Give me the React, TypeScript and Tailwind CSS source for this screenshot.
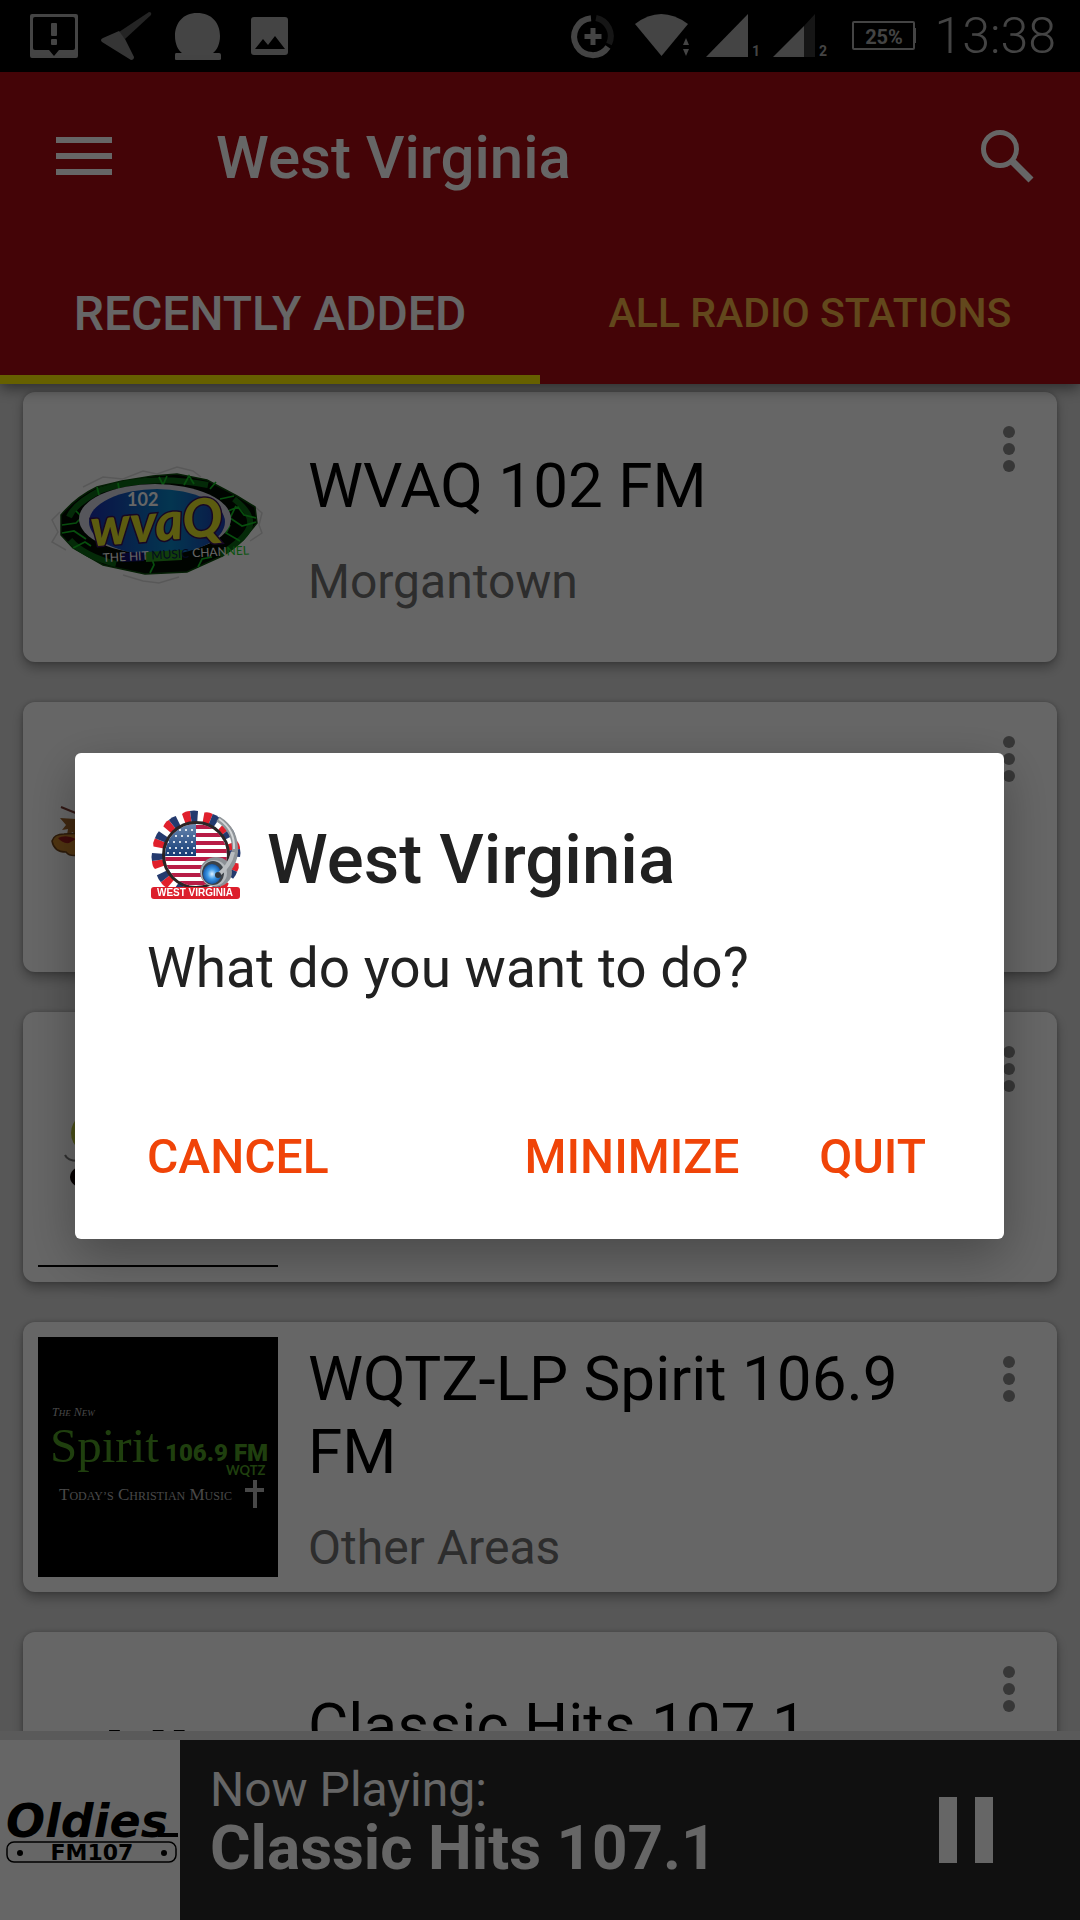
import { useState, type ReactNode } from "react";

type Station = {
  id: number;
  name?: string;
  area?: string;
  logo: ReactNode;
};

const TABS = ["RECENTLY ADDED", "ALL RADIO STATIONS"];

/* ---------- Status bar ---------- */

const StatusBar = () => (
  <div className="flex h-[72px] shrink-0 items-center justify-between bg-black pl-[18px] pr-6 text-[#aaaaaa]">
    <div className="flex">
      {/* Alert message */}
      <svg viewBox="0 0 72 72" className="size-[72px]" fill="currentColor">
        <path
          fillRule="evenodd"
          d="M14 14h44a2 2 0 0 1 2 2v40a2 2 0 0 1-2 2H14a2 2 0 0 1-2-2V16a2 2 0 0 1 2-2zM17 17a2 2 0 0 0-2 2v29a2 2 0 0 0 2 2h14l5 6 5-6h14a2 2 0 0 0 2-2V19a2 2 0 0 0-2-2z"
        />
        <rect x="33" y="23" width="6" height="13" rx="1" />
        <rect x="33" y="39" width="6" height="6" rx="1" />
      </svg>
      {/* Location arrow */}
      <svg viewBox="0 0 72 72" className="size-[72px]">
        <path d="M29 32 59 12q3 0 2 3L35 39z" fill="#5a5a5a" />
        <path d="M11 40q0-1 2-2l16-7 6 8 9 18q0 3-3 3L12 42q-1-1-1-2z" fill="#868686" />
      </svg>
      {/* Round avatar */}
      <svg viewBox="0 0 72 72" className="size-[72px]" fill="currentColor">
        <path d="M35 13c15 0 23 10 23 23 0 8-3 14-7 17h6q2 0 2 2v4q0 1-2 1H14q-1 0-1-1v-4q0-2 1-2h6c-4-3-7-9-7-17 0-13 8-23 22-23z" />
      </svg>
      {/* Picture */}
      <svg viewBox="0 0 72 72" className="size-[72px]" fill="currentColor">
        <path
          fillRule="evenodd"
          d="M20 17h31a3 3 0 0 1 3 3v32a3 3 0 0 1-3 3H20a3 3 0 0 1-3-3V20a3 3 0 0 1 3-3zM21 49h30l-10-13-7 9-5-6z"
        />
      </svg>
    </div>

    <div className="flex items-center">
      {/* Data saver */}
      <svg viewBox="0 0 68 72" className="h-[72px] w-[68px]" fill="none" strokeWidth="6">
        <path d="M26 18.200A18.500 18.500 0 1 0 43 47" stroke="#aaaaaa" />
        <path d="M31 18A18.500 18.500 0 0 1 44 44" stroke="#383838" />
        <path d="M28 28v17M19.500 36.500h17" stroke="#aaaaaa" strokeWidth="5" />
      </svg>
      {/* Wifi */}
      <svg viewBox="0 0 68 72" className="h-[72px] w-[68px]" fill="currentColor">
        <path d="M2 24Q28 4 55 24L28.500 56z" />
        <path d="m53 38 3 7h-6zM53 56l3-7h-6z" />
      </svg>
      {/* SIM 1 */}
      <svg viewBox="0 0 68 72" className="h-[72px] w-[68px]" fill="currentColor">
        <path d="M5 57 47 14v43z" />
        <text x="51" y="56" fontSize="14" fontWeight="700">1</text>
      </svg>
      {/* SIM 2 */}
      <svg viewBox="0 0 68 72" className="h-[72px] w-[68px]" fill="currentColor">
        <path d="M35 26 46 14v43H35z" fill="#383838" />
        <path d="M4 57 35 26v31z" />
        <text x="50" y="56" fontSize="14" fontWeight="700">2</text>
      </svg>
      {/* Battery */}
      <svg viewBox="0 0 80 72" className="h-[72px] w-[80px]" fill="currentColor">
        <rect x="16" y="22" width="61" height="27" rx="1" fill="none" stroke="currentColor" strokeWidth="2" />
        <rect x="77" y="28" width="2" height="15" />
        <text x="47" y="44" fontSize="20" fontWeight="700" textAnchor="middle">25%</text>
      </svg>
      <span className="ml-[18px] text-[50px] font-light leading-[72px]">13:38</span>
    </div>
  </div>
);

/* ---------- Station logos ---------- */

const WvaqLogo = () => (
  <svg viewBox="0 0 240 240" className="size-full">
    <defs>
      <linearGradient id="wvaq-blue" x1="0" x2="1">
        <stop offset="0" stopColor="#1a2fb0" />
        <stop offset="0.6" stopColor="#0a86c8" />
        <stop offset="1" stopColor="#1c3cb4" />
      </linearGradient>
    </defs>
    <g fill="none" stroke="#dddddd" strokeWidth="1.500">
      <path d="m22 105-8 8 6 12-6 10 14 8M45 80l20-10 20 2 20-8 14 3 20-7 16 4 8 6M215 98l9 8-3 12 3 8-12 8M85 168l20 6 16 2 20-6" />
    </g>
    <path
      d="M23 108Q38 90 59 80L84 74l31-5 24-2 30 6 30 16 18 11 2 16-14 17-23 17-33 15-42 2-42-9-30-17-12-13z"
      fill="#020a02"
      stroke="#0a4a0a"
      strokeWidth="1.500"
    />
    <g fill="none" stroke="#0c6a16" strokeWidth="6">
      <path d="M31 110q6-14 34-28M32 133q14 16 46 24M196 92q18 14 16 26t-30 30M60 84q50-18 110-6" />
    </g>
    <g fill="none" stroke="#12c422" strokeWidth="1.700">
      <path d="m24 118 14-2 8-8M24 126l12-2 12 8M38 104l6 6M35 141l12-6 6 4M59 80l2 8M80 76l1 6M121 70l4 8 4-9M146 78l5-9 5 8M172 82l6-7M182 92l14-3M190 104l10-4 6 8 12 3M198 99l-6 12 12 8 14-4M192 118l-4 8 14 8M112 166l4-8-2-6M160 160l4-8 10-2" />
    </g>
    <ellipse cx="117" cy="112" rx="76" ry="35" fill="#d8d8e4" />
    <ellipse cx="119" cy="115" rx="68" ry="33" fill="url(#wvaq-blue)" />
    <text x="89" y="99" fontSize="18" fontFamily="Lato" fontWeight="700" fill="#ffffff">102</text>
    <text
      x="54"
      y="139"
      fontSize="53"
      fontFamily="Lato"
      fontWeight="900"
      fontStyle="italic"
      fill="#e6e628"
      stroke="#3b1258"
      strokeWidth="3"
      paintOrder="stroke"
      transform="rotate(-5 60 138)"
    >
      wvaQ
    </text>
    <path d="m84 146 22-1v9l-22 1z" fill="#101070" />
    <path d="m108 145 36-2v10l-36 2z" fill="#2c9c20" />
    <text x="65" y="155" fontSize="12" fontFamily="Lato" fill="#ffffff" transform="rotate(-3 65 155)">
      THE HIT <tspan fill="#0a1a50">MUSIC</tspan> CHAN<tspan fill="#18d028">NEL</tspan>
    </text>
  </svg>
);

const MascotLogo = () => (
  <svg viewBox="0 0 240 240" className="size-full">
    <path d="m23 90 22 9" fill="none" stroke="#7a3a30" strokeWidth="2" />
    <path d="m22 101 16 1 10 4v16l-7-5-4 4-2-6-6 3 1-6-6 1 4-5z" fill="#a06428" />
    <path d="M14 124q2-7 12-7l22-1v30q-6-2-8-8-8 2-12-3-12 0-14-11z" fill="#c8842c" stroke="#70441a" strokeWidth="1.500" />
    <path d="M20 121q8-4 18 1l-7 4q-6 1-11-5z" fill="#9c1c1c" />
  </svg>
);

const TennisLogo = () => (
  <svg viewBox="0 0 240 240" className="size-full">
    <ellipse cx="62" cy="106" rx="29" ry="24" fill="#b9c43a" />
    <path d="M27 128q4 9 26 4" fill="none" stroke="#777777" strokeWidth="2" />
    <ellipse cx="52" cy="150" rx="20" ry="13" fill="#0c0000" />
    <path d="M0 239h240" stroke="#000000" strokeWidth="2" />
  </svg>
);

const SpiritLogo = () => (
  <svg viewBox="0 0 240 240" className="size-full">
    <rect width="240" height="240" fill="#000000" />
    <g fontFamily="Liberation Serif" fill="#b4b4b4">
      <text x="14" y="79" fontSize="12" fontStyle="italic">
        T<tspan fontSize="9">HE</tspan> N<tspan fontSize="9">EW</tspan>
      </text>
      <text x="21" y="163" fontSize="17">
        T<tspan fontSize="12">ODAY’S</tspan> C<tspan fontSize="12">HRISTIAN</tspan> M<tspan fontSize="12">USIC</tspan>
      </text>
    </g>
    <g fill="#4f9f24">
      <text x="12" y="125" fontSize="49" fontFamily="Liberation Serif">Spirit</text>
      <text x="127" y="124" fontSize="24" fontWeight="900" fontFamily="Roboto">106.9 FM</text>
      <text x="188" y="138" fontSize="13" fontWeight="700" fontFamily="Lato">WQTZ</text>
    </g>
    <path d="M217 143v28M207 153h19" stroke="#b4b4b4" strokeWidth="4" />
  </svg>
);

const OldiesLogo = () => (
  <svg viewBox="0 0 180 180" className="size-full">
    <text x="6" y="97" fontSize="46" fontFamily="DejaVu Sans" fontWeight="700" fontStyle="italic">Oldies</text>
    <path d="M158 95h20" stroke="#000000" strokeWidth="4" />
    <rect x="7" y="102" width="169" height="20" rx="7" fill="none" stroke="#000000" strokeWidth="1.500" />
    <circle cx="20" cy="113" r="3" />
    <circle cx="164" cy="113" r="3" />
    <text x="92" y="120" fontSize="22" fontFamily="DejaVu Sans" fontWeight="700" textAnchor="middle">FM107</text>
  </svg>
);

const AppLogo = () => {
  const petals = Array.from({ length: 12 }, (_, i) => i * 30);
  return (
    <svg viewBox="0 0 96 96" className="size-24 shrink-0">
      <defs>
        <clipPath id="flag">
          <circle cx="49" cy="45" r="31" />
        </clipPath>
        <linearGradient id="canton" x1="0" y1="0" x2="0" y2="1">
          <stop offset="0" stopColor="#6f8db5" />
          <stop offset="1" stopColor="#123a74" />
        </linearGradient>
        <radialGradient id="ear">
          <stop offset="0" stopColor="#dff2ff" />
          <stop offset="0.5" stopColor="#3f9be8" />
          <stop offset="1" stopColor="#1458a8" />
        </radialGradient>
      </defs>
      {petals.map((angle) => (
        <g key={angle} transform={`rotate(${angle} 49 45)`}>
          <path d="M35 4q3-3 8-3l2 14h-6z" fill="#e0202c" />
          <path d="M43 1q4-1 8 0l-1 14h-5z" fill="#243a6e" />
        </g>
      ))}
      <g clipPath="url(#flag)">
        <rect width="96" height="96" fill="#ffffff" />
        <path
          d="M49 17h34M49 25h34M49 33h34M49 41h34M15 49h68M15 57h68M15 65h68M15 73h68"
          stroke="#b81c46"
          strokeWidth="4"
        />
        <rect x="15" y="12" width="34" height="34" fill="url(#canton)" />
        {[20, 26, 32, 38, 43].map((y, row) =>
          [21, 27, 33, 39, 45].map((x) => (
            <circle key={`${x}-${y}`} cx={x + (row % 2 ? 2 : 0)} cy={y} r="1.100" fill="#ffffff" />
          ))
        )}
      </g>
      <circle cx="49" cy="45" r="32.500" fill="none" stroke="#2b2526" strokeWidth="3" />
      <path d="M71 9q18 11 17 33-1 12-8 18" fill="none" stroke="#8f9498" strokeWidth="6" />
      <path d="M72 9q16 11 15 30" fill="none" stroke="#d3d6d8" strokeWidth="2" />
      <ellipse cx="69" cy="62" rx="16" ry="15" fill="#8b9095" />
      <ellipse cx="67" cy="63" rx="13" ry="13" fill="#b4b9bd" />
      <ellipse cx="66" cy="63" rx="11" ry="12" fill="#3c4248" />
      <ellipse cx="65" cy="64" rx="9" ry="10" fill="url(#ear)" />
      <path d="M86 42q-3 14-15 23" fill="none" stroke="#b9bdc0" strokeWidth="4" />
      <circle cx="71" cy="65" r="3" fill="#30363c" />
      <path d="M0 89h96v7H0z" fill="#ffffff" />
      <rect x="4" y="77" width="89" height="12" rx="3" fill="#dc1f2c" />
      <text x="48" y="86" fontSize="10" fontFamily="Liberation Sans" fontWeight="700" textAnchor="middle" fill="#ffffff">
        WEST VIRGINIA
      </text>
    </svg>
  );
};

const stations: Station[] = [
  { id: 1, name: "WVAQ 102 FM", area: "Morgantown", logo: <WvaqLogo /> },
  { id: 2, logo: <MascotLogo /> },
  { id: 3, logo: <TennisLogo /> },
  { id: 4, name: "WQTZ-LP Spirit 106.9 FM", area: "Other Areas", logo: <SpiritLogo /> },
  { id: 5, name: "Classic Hits 107.1", logo: <OldiesLogo /> },
];

/* ---------- List ---------- */

const StationCard = ({ station }: { station: Station }) => (
  <li className="flex h-[270px] shrink-0 rounded-xl bg-white p-[15px] shadow-[0_6px_12px_rgba(0,0,0,0.3),0_0_4px_rgba(0,0,0,0.2)]">
    <div className="size-60 shrink-0">{station.logo}</div>
    <div className="ml-[30px] flex min-w-0 flex-1 flex-col justify-center pb-1">
      <h2 className="text-[62px] leading-[73px] text-black">{station.name}</h2>
      <p className="mt-10 h-10 text-5xl leading-10 text-[#707070]">{station.area}</p>
    </div>
    <button type="button" aria-label="More options" className="flex h-[84px] w-[66px] shrink-0 items-center justify-center">
      <svg viewBox="0 0 12 46" className="h-[46px] w-3" fill="#8a8a8a">
        <circle cx="6" cy="6" r="6" />
        <circle cx="6" cy="23" r="6" />
        <circle cx="6" cy="40" r="6" />
      </svg>
    </button>
  </li>
);

export default function App() {
  const [activeTab, setActiveTab] = useState(0);
  const [dialogOpen, setDialogOpen] = useState(true);

  return (
    <div className="flex h-screen flex-col overflow-hidden bg-[#dadada] font-[Roboto,sans-serif]">
      <StatusBar />

      <header className="relative z-10 shrink-0 bg-[#aa0a12] text-white shadow-[0_4px_14px_rgba(0,0,0,0.5)]">
        <div className="flex h-[168px] items-center pl-14 pr-[46px]">
          <button type="button" aria-label="Menu">
            <svg viewBox="0 0 56 38" className="h-[38px] w-14" fill="currentColor">
              <path d="M0 0h56v6H0zM0 16h56v6H0zM0 32h56v6H0z" />
            </svg>
          </button>
          <h1 className="ml-26 flex-1 pt-1 text-[60px] font-medium leading-[70px]">West Virginia</h1>
          <button type="button" aria-label="Search">
            <svg viewBox="0 0 54 54" className="size-[54px]" fill="none" stroke="currentColor">
              <circle cx="20" cy="20" r="16.500" strokeWidth="5" />
              <path d="m33 33 18 18" strokeWidth="7" />
            </svg>
          </button>
        </div>
        <nav className="flex h-36">
          {TABS.map((tab, index) => (
            <button
              key={tab}
              type="button"
              onClick={() => setActiveTab(index)}
              className={`flex-1 border-b-[9px] pt-3 font-medium ${
                activeTab === index
                  ? "border-[#fff000] text-5xl text-white"
                  : "border-transparent text-[41px] text-[#f5b446]"
              }`}
            >
              {tab}
            </button>
          ))}
        </nav>
      </header>

      <main className="min-h-0 flex-1 overflow-hidden">
        <ul className="flex flex-col gap-10 px-[23px] pt-2">
          {stations.map((station) => (
            <StationCard key={station.id} station={station} />
          ))}
        </ul>
      </main>

      {/* Player */}
      <footer className="flex shrink-0 items-center border-t-[9px] border-[#e0e0e0] bg-[#282828] text-white">
        <div className="size-[180px] shrink-0 bg-white text-black">
          <OldiesLogo />
        </div>
        <div className="ml-[30px] flex-1 pb-5">
          <p className="text-5xl leading-[56px]">Now Playing:</p>
          <p className="text-[62px] font-bold leading-[60px]">Classic Hits 107.1</p>
        </div>
        <button type="button" aria-label="Pause" className="mr-[87px]">
          <svg viewBox="0 0 54 66" className="h-[66px] w-[54px]" fill="currentColor">
            <path d="M0 0h18v66H0zM36 0h18v66H36z" />
          </svg>
        </button>
      </footer>

      {/* Exit dialog */}
      {dialogOpen && (
        <div className="fixed inset-0 z-20 flex items-center bg-black/60 pl-[75px] pr-[76px] pt-[72px]">
          <div
            role="dialog"
            aria-labelledby="dialog-title"
            className="w-full rounded-md bg-white pb-[54px] pl-[72px] pr-[78px] pt-[57px] text-[#212121] shadow-[0_16px_50px_rgba(0,0,0,0.3)]"
          >
            <div className="flex items-center gap-6">
              <AppLogo />
              <h2 id="dialog-title" className="pt-1 text-[69px] font-medium leading-[80px]">
                West Virginia
              </h2>
            </div>
            <p className="mt-[30px] text-[55px] leading-[64px]">What do you want to do?</p>
            <div className="mt-[129px] flex text-5xl font-medium leading-[56px] text-[#f04408]">
              <button type="button" onClick={() => setDialogOpen(false)}>CANCEL</button>
              <button type="button" className="ml-auto mr-20" onClick={() => setDialogOpen(false)}>
                MINIMIZE
              </button>
              <button type="button" onClick={() => setDialogOpen(false)}>QUIT</button>
            </div>
          </div>
        </div>
      )}
    </div>
  );
}
